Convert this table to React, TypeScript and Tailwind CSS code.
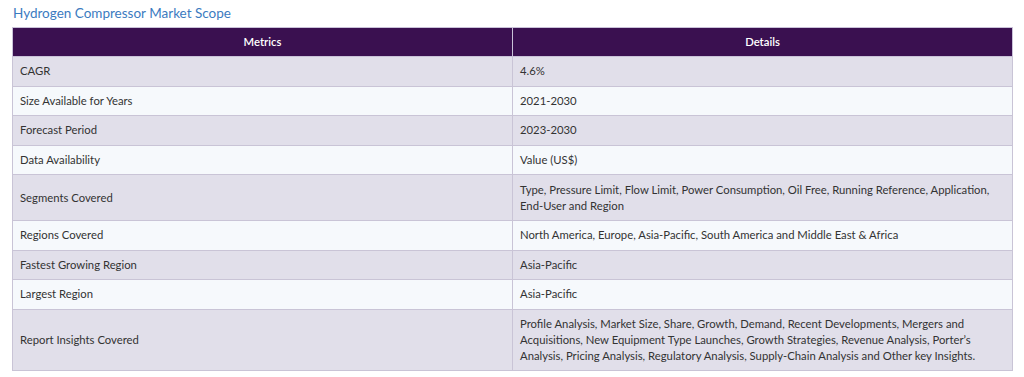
import React from "react";

const rows: [string, string][] = [
  ["CAGR", "4.6%"],
  ["Size Available for Years", "2021-2030"],
  ["Forecast Period", "2023-2030"],
  ["Data Availability", "Value (US$)"],
  [
    "Segments Covered",
    "Type, Pressure Limit, Flow Limit, Power Consumption, Oil Free, Running Reference, Application, End-User and Region",
  ],
  ["Regions Covered", "North America, Europe, Asia-Pacific, South America and Middle East & Africa"],
  ["Fastest Growing Region", "Asia-Pacific"],
  ["Largest Region", "Asia-Pacific"],
  [
    "Report Insights Covered",
    "Profile Analysis, Market Size, Share, Growth, Demand, Recent Developments, Mergers and Acquisitions, New Equipment Type Launches, Growth Strategies, Revenue Analysis, Porter\u2019s Analysis, Pricing Analysis, Regulatory Analysis, Supply-Chain Analysis and Other key Insights.",
  ],
];

export default function App() {
  return (
    <div
      className="bg-white w-[1024px] h-[377px] pl-[12px] pr-[11px] pt-[4px]"
      style={{ fontFamily: "Lato, 'Noto Sans', sans-serif" }}
    >
      <h2 className="text-[13.5px] leading-[18px] text-[#3b7bbf] pl-[1px] mb-[5px]">
        Hydrogen Compressor Market Scope
      </h2>
      <table className="w-full border-collapse table-fixed text-[11.3px] leading-[16px] text-[#333]">
        <thead>
          <tr className="bg-[#3a1050] text-white">
            <th className="w-1/2 border border-[#c9c2d8] py-[6px] font-semibold text-center">Metrics</th>
            <th className="w-1/2 border border-[#c9c2d8] py-[6px] font-semibold text-center">Details</th>
          </tr>
        </thead>
        <tbody>
          {rows.map(([k, v], i) => (
            <tr key={k} className={i % 2 === 0 ? "bg-[#e1dfea]" : "bg-[#f6f9fc]"}>
              <td className="border border-[#c9c4d6] px-[7px] py-[6.3px] align-middle">{k}</td>
              <td className="border border-[#c9c4d6] px-[7px] py-[6.3px] align-middle">{v}</td>
            </tr>
          ))}
        </tbody>
      </table>
    </div>
  );
}
